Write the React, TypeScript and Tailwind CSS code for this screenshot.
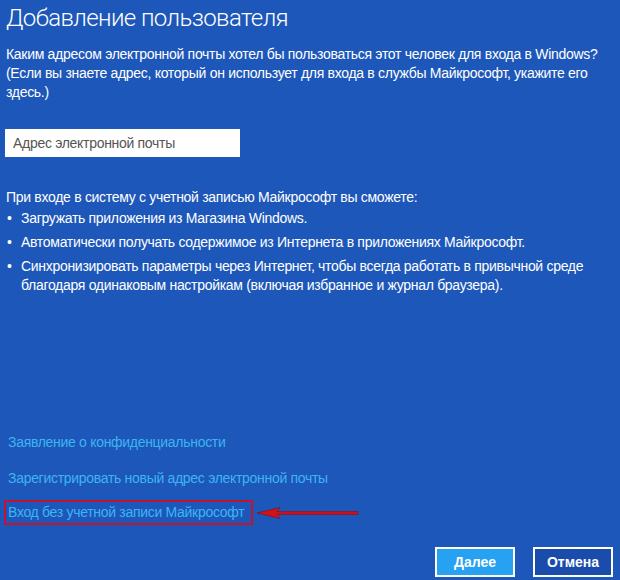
import React from 'react';

const BULLETS = [
  'Загружать приложения из Магазина Windows.',
  'Автоматически получать содержимое из Интернета в приложениях Майкрософт.',
  'Синхронизировать параметры через Интернет, чтобы всегда работать в привычной среде',
];

function RedArrow() {
  return (
    <svg width="106" height="16" viewBox="0 0 106 16" className="ml-[3px]">
      <path d="M1 8 L24 2.5 L21 6.6 L102 6.6 L102 9.4 L21 9.4 L24 13.5 Z" fill="#d0121c" stroke="#8a0b12" strokeWidth="0.6" />
    </svg>
  );
}

export default function App() {
  return (
    <div
      className="flex h-[580px] w-[620px] flex-col overflow-hidden bg-[#1d57b9] tracking-[-0.3px] text-white"
      style={{ fontFamily: '"Liberation Sans", Arial, sans-serif' }}
    >
      <h1
        className="whitespace-nowrap pl-[6px] pt-[2px] text-[24px] font-light leading-[32px] tracking-[-0.6px]"
        style={{ fontFamily: 'Roboto, "Open Sans", sans-serif' }}
      >
        Добавление пользователя
      </h1>

      <p className="mt-[11px] whitespace-nowrap pl-[6px] text-[14px] leading-[19px]">
        Каким адресом электронной почты хотел бы пользоваться этот человек для входа в Windows?
        <br />
        (Если вы знаете адрес, который он использует для входа в службы Майкрософт, укажите его
        <br />
        здесь.)
      </p>

      <div className="ml-[5px] mt-[27px] flex h-[28px] w-[235px] items-center bg-white pl-[8px] text-[14px] text-[#555]">
        Адрес электронной почты
      </div>

      <p className="mt-[31px] pl-[6px] text-[14px] leading-[19px]">
        При входе в систему с учетной записью Майкрософт вы сможете:
      </p>
      <ul className="mt-[2px] flex flex-col gap-[5px] pl-[7px] pr-2 text-[14px] leading-[19px]">
        {BULLETS.map((b, i) => (
          <li key={b} className="flex whitespace-nowrap">
            <span className="w-[14px] shrink-0">•</span>
            <span>
              {b}
              {i === 2 && (
                <>
                  <br />
                  благодаря одинаковым настройкам (включая избранное и журнал браузера).
                </>
              )}
            </span>
          </li>
        ))}
      </ul>

      <div className="mt-auto flex flex-col text-[14px] leading-[19px] text-[#3db4f2]">
        <span className="pl-[8px]">Заявление о конфиденциальности</span>
        <span className="mt-[17px] pl-[8px]">Зарегистрировать новый адрес электронной почты</span>
        <div className="mt-[12px] flex items-center">
          <span className="ml-[4px] flex h-[25px] w-[249px] items-center whitespace-nowrap border-2 border-[#c4142b] pl-[2px]">
            Вход без учетной записи Майкрософт
          </span>
          <RedArrow />
        </div>
      </div>

      <div className="mb-[3px] mt-[22px] flex justify-end gap-[18px] pr-[7px] text-[14px] tracking-normal">
        <button className="h-[30px] w-[80px] border-2 border-white bg-[#27a1f2] font-bold">Далее</button>
        <button className="h-[30px] w-[80px] border-2 border-white bg-[#1a4cab] font-bold">Отмена</button>
      </div>
    </div>
  );
}
